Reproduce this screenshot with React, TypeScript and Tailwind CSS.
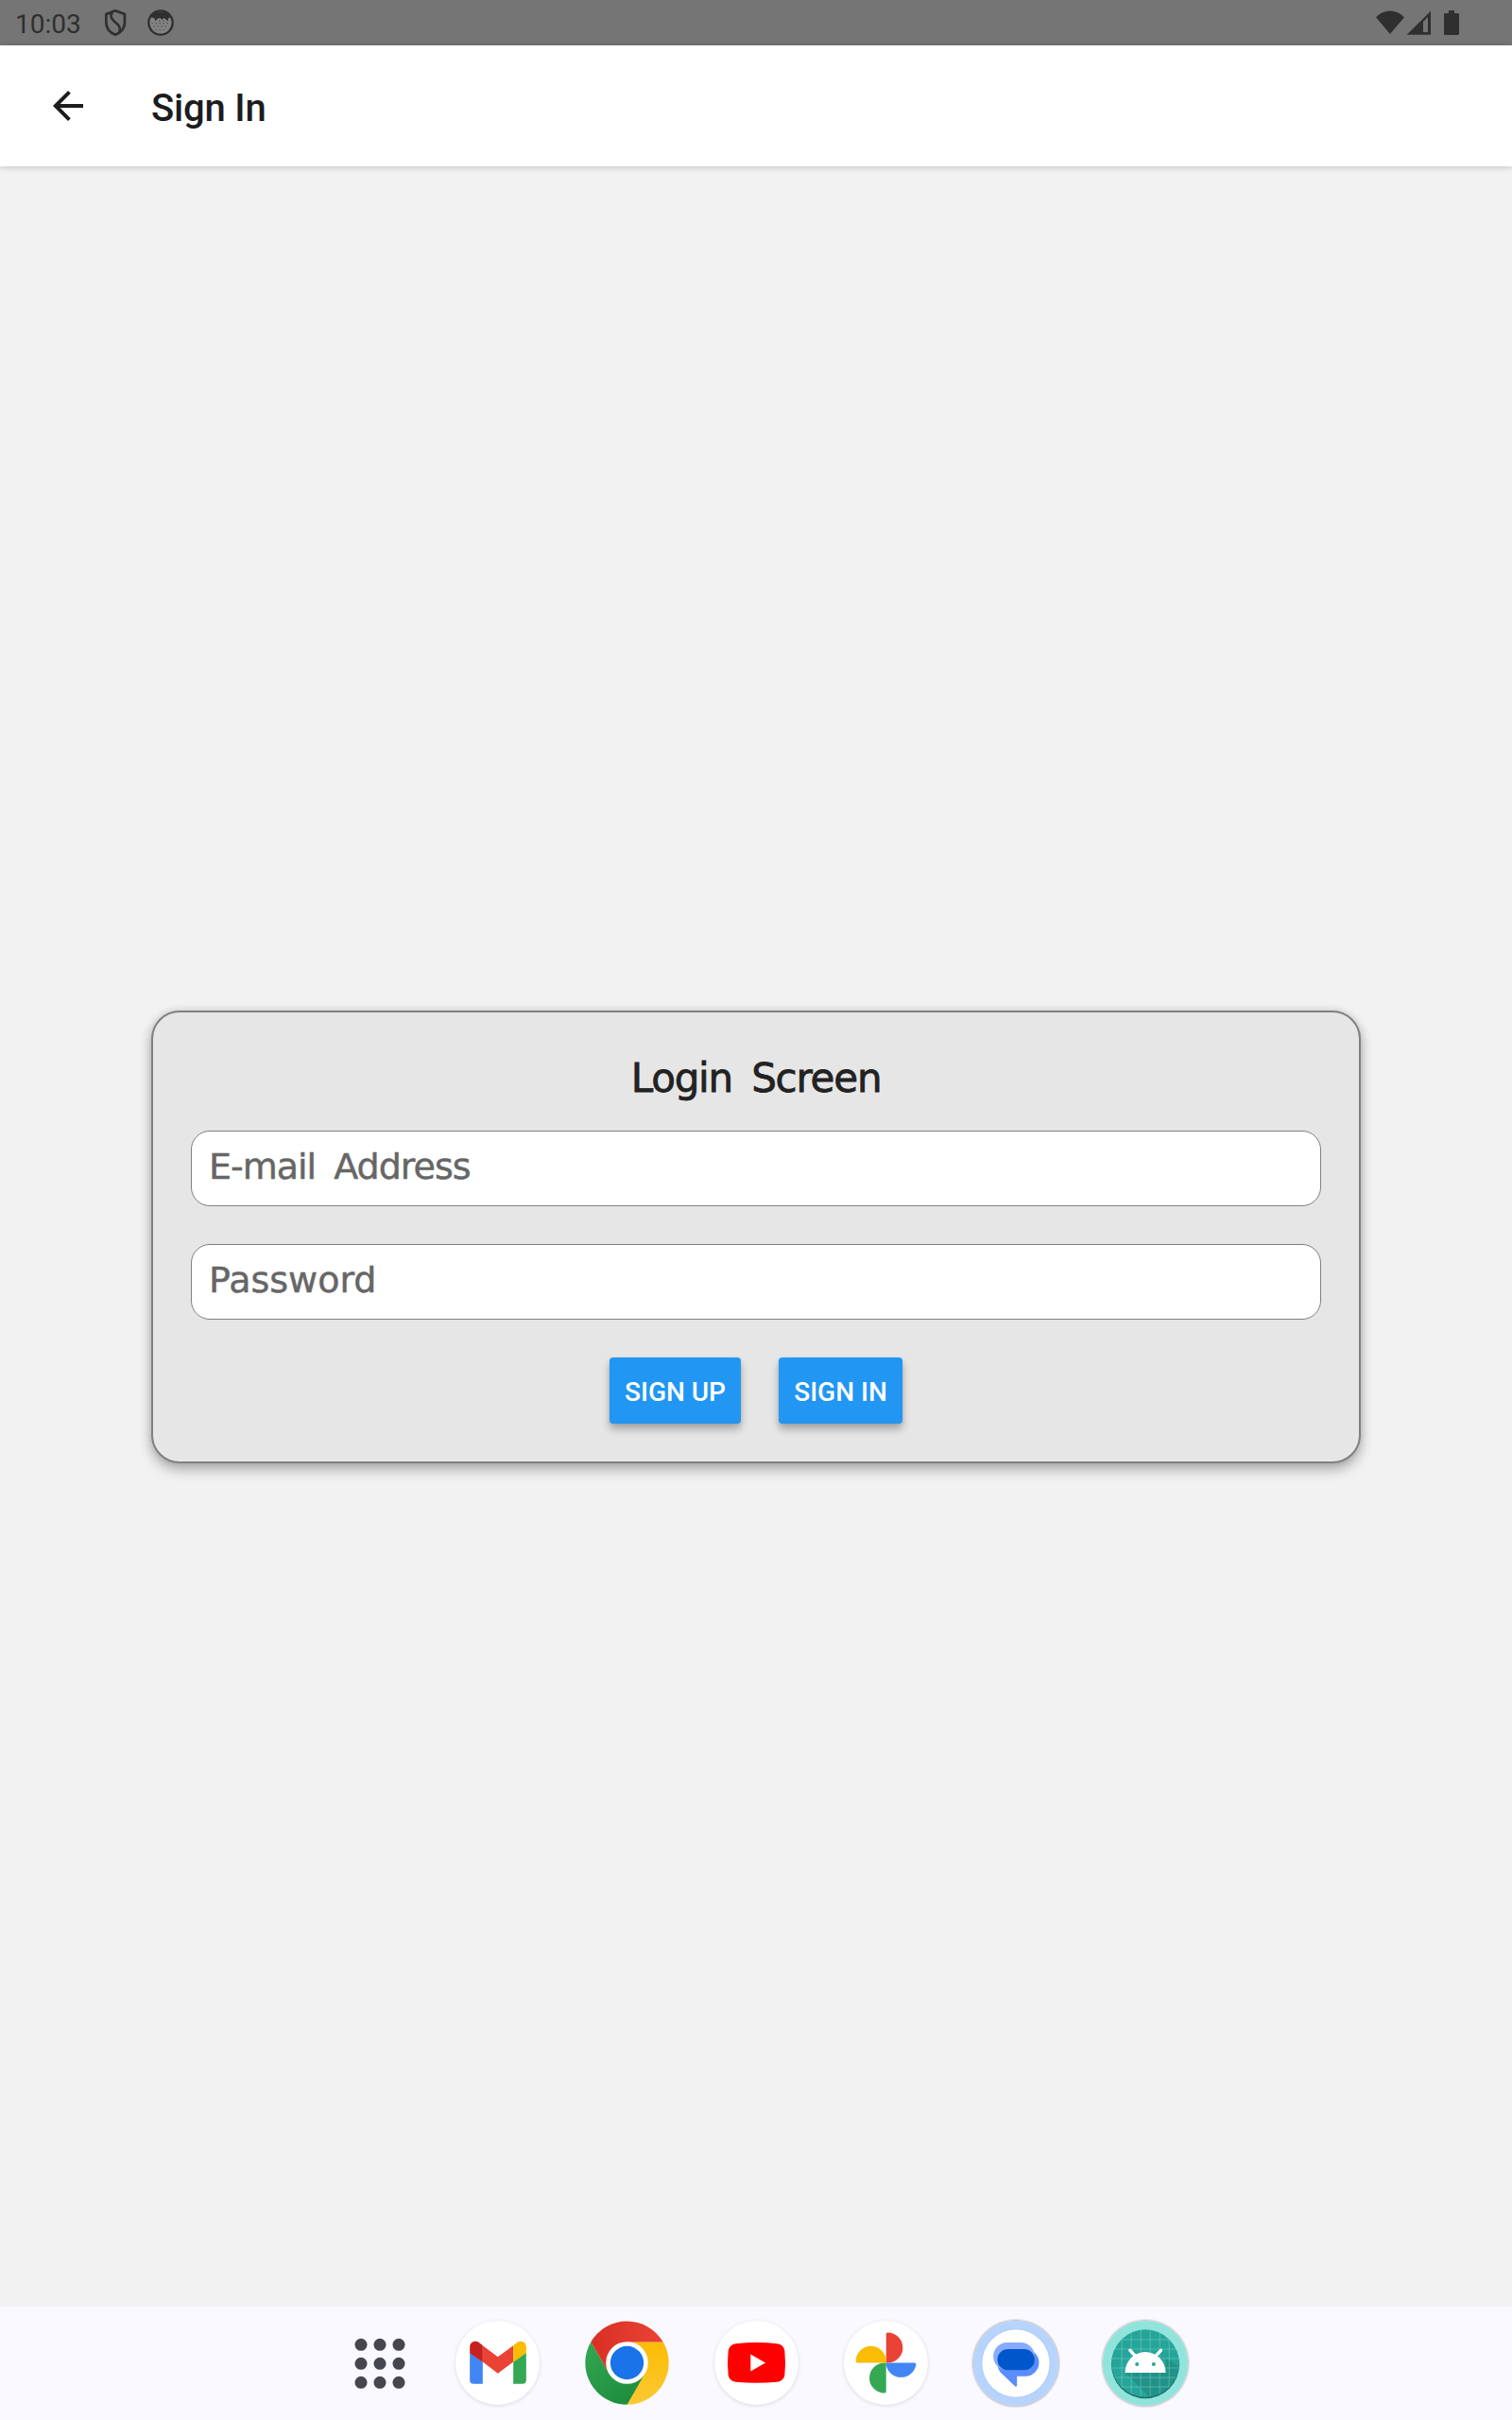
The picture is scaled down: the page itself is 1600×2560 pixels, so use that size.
import type { ReactNode } from 'react';

function StatusBar() {
  return (
    <header className="flex h-12 items-center bg-[#757575] pl-4 pr-[52px] text-[#2f2f2f]">
      <span className="mt-[3px] w-[88px] whitespace-nowrap text-[28px] leading-none">10:03</span>
      <svg className="h-[30px] w-9" viewBox="312 27 108 90" fill="none" stroke="currentColor" strokeLinejoin="round">
        <path strokeWidth="8" d="M366 34 L396 45 V70 C396 90 384 104 366 110 C348 104 337 90 337 70 V45 Z" />
        <path strokeWidth="8" d="M356 39 C349 52 353 59 364 69 C378 80 384 88 379 101" />
      </svg>
      <svg className="ml-3 h-[30px] w-9" viewBox="456 27 108 90">
        <circle cx="510" cy="72" r="38" fill="#828282" stroke="currentColor" strokeWidth="7" />
        <path fill="currentColor" d="M476 54 C484 32 536 32 544 54 L534 58 V67 L525 60 L520 57 L514 62 L508 57 L500 59 L493 67 L490 58 Z" />
        <path stroke="currentColor" strokeWidth="3" strokeDasharray="3 9" d="M482 74 H540 M488 84 H534 M494 95 H526 M505 66 H530" />
      </svg>
      <svg className="ml-auto h-[30px] w-[94px]" viewBox="102 27 282 90" fill="currentColor">
        <path d="M108 55 C134 28 172 28 198 55 L153 108 Z" />
        <path fillRule="evenodd" d="M206 110 L282 35 V110 Z M258 69 V102 H273 V54 Z" />
        <path d="M339 33 H357 V42 H368 Q372 42 372 46 V107 Q372 111 368 111 H328 Q324 111 324 107 V46 Q324 42 328 42 H339 Z" />
      </svg>
    </header>
  );
}

function Toolbar() {
  return (
    <div className="z-10 flex h-32 items-center bg-white pl-12 text-[#1c1c1e] shadow-[0_1px_6px_rgba(0,0,0,0.22)]">
      <svg className="size-12" viewBox="0 0 24 24" fill="currentColor">
        <path d="M20 11H7.83l5.59-5.59L12 4l-8 8 8 8 1.41-1.41L7.83 13H20v-2z" />
      </svg>
      <h1 className="ml-16 mt-1.5 text-[40px] font-medium leading-none tracking-[-0.2px]">Sign In</h1>
    </div>
  );
}

function Field({ label, type, spacing }: { label: string; type: string; spacing: string }) {
  return (
    <input
      type={type}
      placeholder={label}
      className={`${spacing} h-20 w-full rounded-[20px] border border-[#808080] bg-white px-[18px] pb-1 font-['DejaVu_Sans',sans-serif] text-[38px] placeholder:text-[#666666] placeholder:opacity-100 [-webkit-text-stroke:0.5px_#666666]`}
    />
  );
}

function Button({ children, width }: { children: ReactNode; width: string }) {
  return (
    <button
      className={`${width} h-[70px] whitespace-nowrap rounded bg-[#2196f3] pt-1 text-center text-[28px] font-medium leading-none text-white shadow-[0_6px_9px_rgba(0,0,0,0.27),0_1px_4px_rgba(0,0,0,0.08)]`}
    >
      {children}
    </button>
  );
}

function AppIcon({ viewBox, children, disc = false }: { viewBox: string; children: ReactNode; disc?: boolean }) {
  return (
    <div className="flex size-24 items-center justify-center">
      <div className={disc ? 'size-[89px] rounded-full bg-white shadow-[0_1px_4px_rgba(0,0,0,0.13)]' : 'size-[89px] rounded-full'}>
        <svg className="size-[89px]" viewBox={viewBox}>
          {children}
        </svg>
      </div>
    </div>
  );
}

function Dock() {
  const dots = [0, 60, 120];
  return (
    <nav className="flex h-[120px] items-center bg-[#faf9ff] pb-px pl-[353.5px]">
      <svg className="mr-[29px] size-24" viewBox="11 64 288 288" fill="#46464f">
        {dots.map((y) => dots.map((x) => <circle key={`${x}-${y}`} cx={95 + x} cy={149 + y} r="19.5" />))}
      </svg>
      <div className="flex gap-[41px]">
        <AppIcon viewBox="396.5 74.5 267 267" disc>
          <path fill="#4285f4" d="M442 176 L483 205 V275 H454 Q442 275 442 263 Z" />
          <path fill="#34a853" d="M580 205 L621 176 V263 Q621 275 609 275 H580 Z" />
          <path fill="#ea4335" d="M483 153 L531 189 L580 153 V205 L531 242 L483 205 Z" />
          <path fill="#c5221f" d="M442 177 V158 C442 142 459 135 472 144 L483 153 V206 Z" />
          <path fill="#fbbc04" d="M621 177 V158 C621 142 604 135 591 144 L580 153 V206 Z" />
        </AppIcon>
        <AppIcon viewBox="57 74.5 267 267">
          <defs>
            <linearGradient id="red"><stop stopColor="#d93025" /><stop offset="1" stopColor="#ea4335" /></linearGradient>
            <linearGradient id="green" x2=".6" y2="1"><stop stopColor="#34a853" /><stop offset="1" stopColor="#1e8e3e" /></linearGradient>
            <linearGradient id="yellow" x2="0" y2="1"><stop stopColor="#fbbc04" /><stop offset="1" stopColor="#fcc934" /></linearGradient>
          </defs>
          <path fill="url(#yellow)" d="M190.5 142 H305.5 A133 133 0 0 1 190.5 341 L170 270 Z" />
          <path fill="url(#green)" d="M190.5 341 A133 133 0 0 1 76 141 L133 241 L190 260 L248 241 Z" />
          <path fill="url(#red)" d="M76 141 A133 133 0 0 1 305 142 H190.5 L190 208 L133 241 Z" />
          <circle cx="190.5" cy="208" r="67" fill="#fff" />
          <circle cx="190.5" cy="208" r="53" fill="#1a73e8" />
        </AppIcon>
        <AppIcon viewBox="468 74.5 267 267" disc>
          <path fill="#f00" d="M536 147 Q602 140 667 147 Q688 150 691 170 Q695 208 691 247 Q688 266 667 269 Q602 275 536 269 Q515 266 512 247 Q508 208 512 170 Q515 150 536 147 Z" />
          <path fill="#fff" d="M583 181 L630 208 L583 235 Z" />
        </AppIcon>
        <AppIcon viewBox="69 74.5 267 267" disc>
          <path fill="#ea4335" d="M203 208 V117 Q203 112 208 112 A48 48 0 0 1 208 208 Z" />
          <path fill="#4285f4" d="M203 208 H294 Q298 208 298 213 A48 48 0 0 1 203 213 Z" />
          <path fill="#34a853" d="M203 208 V299 Q203 304 198 304 A48 48 0 0 1 198 208 Z" />
          <path fill="#fbbc04" d="M203 208 H112 Q107 208 107 203 A48 48 0 0 1 203 203 Z" />
        </AppIcon>
        <div className="flex size-24 items-center justify-center">
          <div className="size-[90px] rounded-full shadow-[0_0_2px_1px_rgba(0,0,0,0.28)]">
            <svg className="size-[90px]" viewBox="478.5 73 270 270">
              <circle cx="613.5" cy="208" r="135" fill="#b7d4ff" />
              <circle cx="613.5" cy="208" r="110" fill="#a9c7f2" opacity=".6" />
              <circle cx="613.5" cy="208" r="107" fill="#fff" />
              <path fill="#5b8dff" d="M597 163 H644 A43 43 0 0 1 644 249 H617 V278 Q616 285 610 280 L565 237 Q555 226 555 205 Z" />
              <rect x="542" y="142" width="131" height="88" rx="44" fill="#87abff" />
              <rect x="555" y="163" width="118" height="67" rx="33.5" fill="#0057cc" />
            </svg>
          </div>
        </div>
        <div className="flex size-24 items-center justify-center">
          <div className="size-[90px] rounded-full shadow-[0_0_2px_1px_rgba(0,0,0,0.25)]">
            <svg className="size-[90px]" viewBox="109.5 73 270 270">
              <defs>
                <clipPath id="face"><circle cx="244.5" cy="208" r="107" /></clipPath>
              </defs>
              <circle cx="244.5" cy="208" r="135" fill="#90e4db" />
              <circle cx="244.5" cy="212" r="108" fill="#1b6e68" />
              <g clipPath="url(#face)">
                <rect x="137" y="100" width="216" height="216" fill="#26a69a" />
                <path fill="#218f85" d="M180 237 L260 317 H352 V220 L309 190 V237 Z" opacity=".8" />
                <path
                  stroke="#8fd0ca"
                  strokeWidth="1.8"
                  opacity=".8"
                  d="M170 100 V317 M200 100 V317 M230 100 V317 M260 100 V317 M290 100 V317 M320 100 V317 M137 133 H352 M137 163 H352 M137 193 H352 M137 223 H352 M137 253 H352 M137 283 H352"
                />
              </g>
              <path fill="#fff" d="M180 238 A64.5 66 0 0 1 309 238 Z" />
              <path stroke="#fff" strokeWidth="10" strokeLinecap="round" d="M196 167 L214 186 M294 167 L276 186" />
              <circle cx="218" cy="211" r="6" fill="#26a69a" />
              <circle cx="271" cy="211" r="6" fill="#26a69a" />
            </svg>
          </div>
        </div>
      </div>
    </nav>
  );
}

export default function App() {
  return (
    <div className="flex h-[2560px] w-[1600px] flex-col bg-[#f2f2f2] font-[Roboto,sans-serif]">
      <StatusBar />
      <Toolbar />
      <main className="flex flex-1 flex-col px-40 pt-[893px]">
        <section className="flex h-[479px] flex-col items-center rounded-[30px] border-2 border-[#808080] bg-[#e6e6e6] px-10 pt-[45px] shadow-[0_7px_14px_rgba(0,0,0,0.28),0_0_8px_rgba(0,0,0,0.12)]">
          <h2 className="h-20 whitespace-nowrap font-['DejaVu_Sans',sans-serif] text-[42px] leading-[50px] tracking-[-1.2px] text-[#222222] [-webkit-text-stroke:0.8px_#222222] [word-spacing:8px]">
            Login Screen
          </h2>
          <form className="flex w-full flex-col gap-10">
            <Field label="E-mail Address" type="email" spacing="tracking-[-1px] [word-spacing:8px]" />
            <Field label="Password" type="password" spacing="tracking-normal" />
            <div className="flex justify-center gap-10">
              <Button width="w-[139px]">SIGN UP</Button>
              <Button width="w-[131px]">SIGN IN</Button>
            </div>
          </form>
        </section>
      </main>
      <Dock />
    </div>
  );
}
